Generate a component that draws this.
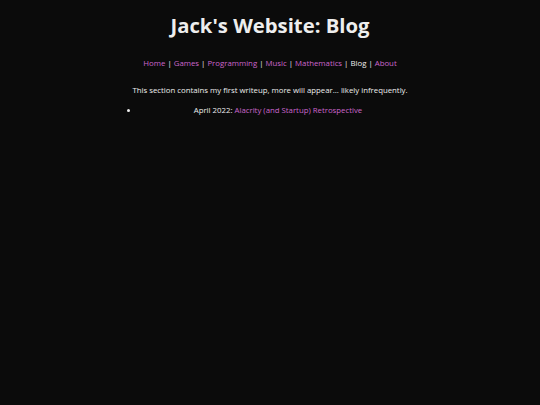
import React from 'react';

const links = ['Home', 'Games', 'Programming', 'Music', 'Mathematics', 'Blog', 'About'];

const App = () => {
  return (
    <div
      className="min-h-screen bg-[#0b0b0b] text-[#eeeeee] text-center"
      style={{ fontFamily: '"Open Sans", sans-serif' }}
    >
      <div className="mx-auto w-[294px] pt-[8px]">
        <h1 className="text-[20.3px] font-bold leading-[34px] whitespace-nowrap">Jack's Website: Blog</h1>

        {/* Nav */}
        <nav className="mt-[14px] text-[7.8px] leading-[14px] whitespace-nowrap">
          {links.map((l, i) => (
            <span key={l}>
              {l === 'Blog' ? (
                <span>{l}</span>
              ) : (
                <a href="#" className="text-[#cc66cc]">{l}</a>
              )}
              {i < links.length - 1 && <span> | </span>}
            </span>
          ))}
        </nav>

        <p className="mt-[13px] text-[7.8px] leading-[14px] whitespace-nowrap">
          This section contains my first writeup, more will appear... likely infrequently.
        </p>
        <ul className="list-disc pl-[16px] mt-[6px] text-[7.8px] leading-[14px]">
          <li>
            April 2022: <a href="#" className="text-[#cc66cc]">Alacrity (and Startup) Retrospective</a>
          </li>
        </ul>
      </div>
    </div>
  );
};

export default App;
